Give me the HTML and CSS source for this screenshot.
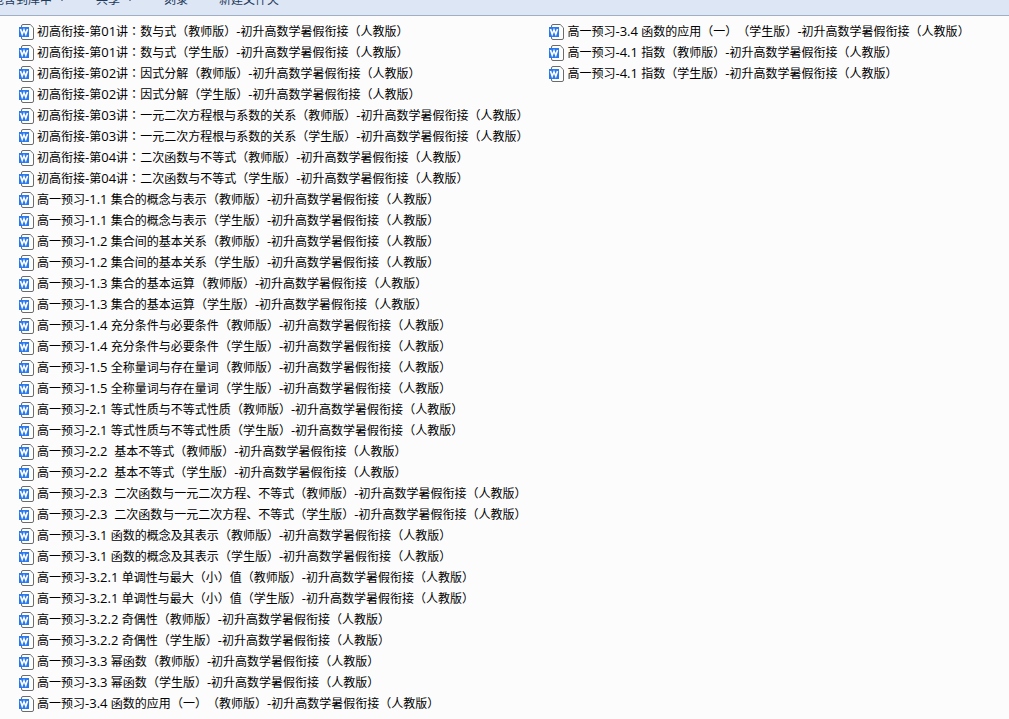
FILE: index.html
```html
<!DOCTYPE html>
<html lang="zh-CN">
<head>
  <meta charset="UTF-8">
  <meta name="viewport" content="width=device-width, initial-scale=1.0">
  <title>初升高数学暑假衔接</title>
  <link rel="stylesheet" href="styles.css">
</head>
<body>

  <!-- Word document icon, reused by every row -->
  <svg class="icon-defs" aria-hidden="true">
    <symbol id="wordIcon" viewBox="0 0 15 16">
      <path d="M2.5 2 Q2.5 .5 4 .5 H11.2 L14.5 3.8 V14 Q14.5 15.5 13 15.5 H4 Q2.5 15.5 2.5 14 Z" fill="#fdfdfd" stroke="#6b6b6b"/>
      <rect x="0" y="3" width="10" height="10" fill="#2878f0"/>
      <path d="M1.5 5 L3.2 10.2 L5 5.8 L6.8 10.2 L8.5 5" fill="none" stroke="#fff" stroke-width="1.6"/>
    </symbol>
  </svg>

  <!-- Toolbar -->
  <nav class="toolbar">
    <button class="tool menu" type="button">包含到库中</button>
    <button class="tool menu" type="button">共享</button>
    <button class="tool" type="button">刻录</button>
    <button class="tool" type="button">新建文件夹</button>
  </nav>

  <!-- File list -->
  <main class="content">
    <ul class="file-list" id="fileList"></ul>
  </main>

  <script>
    // Lessons, each one has a teacher and a student version
    const lessons = [
      "初高衔接-第01讲：数与式",
      "初高衔接-第02讲：因式分解",
      "初高衔接-第03讲：一元二次方程根与系数的关系",
      "初高衔接-第04讲：二次函数与不等式",
      "高一预习-1.1 集合的概念与表示",
      "高一预习-1.2 集合间的基本关系",
      "高一预习-1.3 集合的基本运算",
      "高一预习-1.4 充分条件与必要条件",
      "高一预习-1.5 全称量词与存在量词",
      "高一预习-2.1 等式性质与不等式性质",
      "高一预习-2.2  基本不等式",
      "高一预习-2.3  二次函数与一元二次方程、不等式",
      "高一预习-3.1 函数的概念及其表示",
      "高一预习-3.2.1 单调性与最大（小）值",
      "高一预习-3.2.2 奇偶性",
      "高一预习-3.3 幂函数",
      "高一预习-3.4 函数的应用（一）",
      "高一预习-4.1 指数"
    ];
    const versions = ["教师版", "学生版"];

    const fileList = document.getElementById("fileList");

    // Numbers and hyphens are set a little larger, colons and brackets use the centred forms
    function formatName(name) {
      return name
        .replace(/[-\d. ]+/g, text => `<b>${text}</b>`)
        .replace(/[：（）]+/g, text => `<i lang="zh-TW">${text}</i>`);
    }

    lessons.forEach(lesson => {
      versions.forEach(version => {
        const name = `${lesson}（${version}）-初升高数学暑假衔接（人教版）`;
        const item = document.createElement("li");
        item.innerHTML = `<a class="file" href="#"><svg class="file-icon" aria-hidden="true"><use href="#wordIcon"/></svg><span class="file-name">${formatName(name)}</span></a>`;
        fileList.appendChild(item);
      });
    });
  </script>
</body>
</html>
```
FILE: styles.css
```css
* {
  margin: 0;
  padding: 0;
  box-sizing: border-box;
}

body {
  display: flex;
  flex-direction: column;
  height: 100vh;
  overflow: hidden;
  background-color: #fcfcfc;
  color: #000;
  font-family: "Open Sans", "Noto Sans CJK SC", sans-serif;
  font-size: 12px;
}

.icon-defs {
  display: none;
}

/* Toolbar */
.toolbar {
  display: flex;
  flex: none;
  align-items: flex-end;
  gap: 31px;
  height: 16px;
  padding-bottom: 6px;
  background-color: #dce6f4;
  border-bottom: 1px solid #a0afc3;
}

.tool {
  flex: none;
  border: none;
  background: none;
  color: #1e395b;
  font: inherit;
  line-height: 18px;
}

.tool:first-child {
  margin-left: -8px;
}

/* Drop-down arrow */
.menu::after {
  content: "";
  display: inline-block;
  margin-left: 7px;
  border: 3px solid transparent;
  border-top-color: #1e395b;
  border-bottom: none;
  vertical-align: 3px;
}

/* File list, fills a column and then starts the next one */
.content {
  flex: 1;
  min-height: 0;
  padding: 5px 19px 0;
}

.file-list {
  display: grid;
  grid-auto-flow: column;
  grid-template-rows: repeat(auto-fill, 21px);
  grid-auto-columns: max-content;
  column-gap: 21px;
  height: 100%;
  list-style: none;
}

.file {
  display: flex;
  align-items: center;
  gap: 3px;
  height: 21px;
  color: inherit;
  text-decoration: none;
}

.file-icon {
  flex: none;
  width: 15px;
  height: 16px;
}

.file-name {
  height: 21px;
  line-height: 20px;
  white-space: pre;
  text-spacing-trim: space-all;
}

.file-name b {
  font-size: 13px;
  font-weight: normal;
}

.file-name i {
  font-family: "Open Sans", "Noto Sans CJK TC", sans-serif;
  font-style: normal;
}
```
